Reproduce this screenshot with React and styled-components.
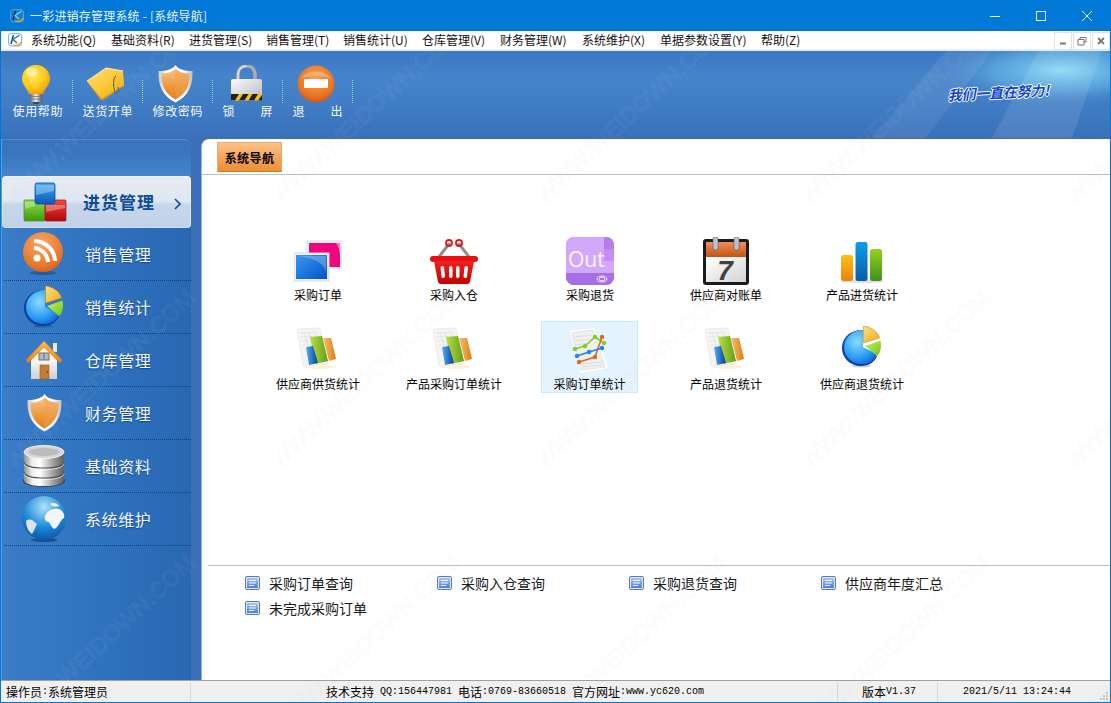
import React from "react";
import styled, { createGlobalStyle } from "styled-components";

const CJK = `"Noto Sans CJK SC", "Liberation Sans", sans-serif`;

const Global = createGlobalStyle`
  html, body { margin: 0; padding: 0; background: #fff; overflow: hidden; }
  * { box-sizing: border-box; }
  body { font-family: ${CJK}; font-size: 12px; }
`;

const Window = styled.div`
  position: relative;
  width: 1111px; height: 703px;
  border: 1px solid #0078d7;
  display: flex; flex-direction: column;
  overflow: hidden;
  background: #3c72ba;
`;
const TitleBar = styled.div`
  height: 30px; flex: none;
  background: #0078d7; color: #fff;
  display: flex; align-items: center;
  padding-left: 8px;
`;
const TitleText = styled.span`
  margin-left: 5px; font-size: 12px; line-height: 16px; letter-spacing: .2px; color: #eaf4fc;
`;
const WinControls = styled.div`
  margin-left: auto; display: flex; height: 30px;
`;
const WinButton = styled.div`
  width: 46px; height: 30px; display: flex; align-items: center; justify-content: center;
`;
const MenuBar = styled.div`
  height: 20px; flex: none; background: #fff;
  border-bottom: 2px solid #e9edf2;
  display: flex; align-items: center;
  padding-left: 6px; color: #111;
`;
const MenuList = styled.div`
  display: flex; gap: 14px; margin-left: 8px;
`;
const MenuEntry = styled.span`
  font-size: 12px; line-height: 16px; white-space: nowrap; width: ${p => p.$w}px;
`;
const MdiButtons = styled.div`
  margin-left: auto; display: flex; gap: 1px; height: 18px; align-self: flex-start; margin-top: 1px;
`;
const MdiButton = styled.div`
  width: 18px; height: 18px; border: 1px solid #dfe1e4; background: #fff;
  display: flex; align-items: center; justify-content: center;
`;
const Banner = styled.div`
  position: relative; height: 87px; flex: none;
  background: linear-gradient(180deg, #3c78c3 0%, #4583cb 30%, #3f7cc4 65%, #3a70ba 100%);
  display: flex; padding: 14px 0 0 2px; overflow: hidden;
`;
const BannerArt = styled.svg`
  position: absolute; right: 0; top: 0; width: 300px; height: 87px;
`;
const ToolItem = styled.div`
  width: 69px; height: 56px; display: flex; flex-direction: column; align-items: center; color: #fff;
`;
const ToolIconBox = styled.div`
  height: 38px; width: 69px; display: flex; justify-content: center; align-items: flex-start;
  padding-right: ${p => p.$nudge || 0}px;
`;
const ToolLabel = styled.span`
  width: 50px; font-size: 12px; line-height: 16px; text-align: justify; text-align-last: justify; color: #f4f8fd;
`;
const ToolSep = styled.div`
  width: 1px; height: 23px; margin-top: 15px; flex: none;
  border-left: 1px dotted #a8c4e4;
`;
const Slogan = styled.span`
  position: absolute; left: 948px; top: 31px; transform: rotate(-3deg) skewX(-14deg);
  font-size: 14px; font-weight: 700; letter-spacing: -.2px; color: #1046c8; white-space: nowrap;
  text-shadow: 1px 0 0 #fff, -1px 0 0 #fff, 0 1px 0 #fff, 0 -1px 0 #fff;
`;
const Main = styled.div`
  height: 542px; flex: none; display: flex; background: #3c6fb8;
`;
const Sidebar = styled.div`
  width: 190px; flex: none; margin-top: 1px; margin-right: 10px;
  background: linear-gradient(90deg, #3a7cc6 0%, #2f73bf 50%, #2967b2 100%);
  border-left: 1px solid #5b9be0;
  display: flex; flex-direction: column;
  border-radius: 0 4px 0 0;
`;
const SideHead = styled.div`
  height: 37px; flex: none; border-radius: 0 6px 0 0;
  background: linear-gradient(180deg, #3a73bb 0%, #3b76c0 40%, #4584cc 100%);
  box-shadow: inset 0 1px 0 #5089cf;
`;
const SideItem = styled.div`
  height: ${p => (p.$active ? 52 : 53)}px; flex: none;
  display: flex; align-items: center; position: relative;
  padding-left: ${p => (p.$active ? 19 : 16)}px; margin-left: ${p => (p.$active ? 0 : 2)}px;
  ${p => (p.$active
    ? `background: linear-gradient(180deg, #e6ecf5 0%, #dfe7f2 48%, #c6d7ec 55%, #bfd2e9 100%);
       border-radius: 4px; box-shadow: inset 0 0 0 1px rgba(255,255,255,.35);`
    : `border-bottom: 1px dotted #0c3f7e;`)}
`;
const SideIconBox = styled.div`
  width: 48px; height: 48px; flex: none; display: flex; align-items: center; justify-content: center;
`;
const SideLabel = styled.span`
  margin-left: ${p => (p.$active ? 14 : 17)}px;
  font-size: ${p => (p.$active ? 17 : 16)}px;
  font-weight: ${p => (p.$active ? 700 : 400)};
  letter-spacing: ${p => (p.$active ? 1 : .6)}px;
  line-height: 22px;
  color: ${p => (p.$active ? "#0e4b92" : "#f5f9fe")};
  text-shadow: ${p => (p.$active ? "none" : "0 1px 1px rgba(0,30,80,.5)")};
`;
const SideChevron = styled.svg`
  position: absolute; right: 9px; top: 22px;
`;
const Panel = styled.div`
  flex: 1; margin-top: 1px; background: #fff;
  border-radius: 8px 0 0 0;
  border-left: 1px solid #8fb4ea;
  display: flex; flex-direction: column;
`;
const TabStrip = styled.div`
  height: 36px; flex: none; border-bottom: 1px solid #bdbdbd;
  padding: 3px 0 0 15px;
`;
const TabButton = styled.div`
  width: 65px; height: 30px;
  background: linear-gradient(180deg, #fdc288 0%, #f6a860 45%, #ee8d36 100%);
  border: 1px solid #e3ad78; border-bottom-color: #d47a22; border-right-color:#e8a466;
  display: flex; align-items: center; justify-content: center;
  font-size: 12px; font-weight: 700; letter-spacing: .4px; color: #000;
`;
const Launcher = styled.div`
  flex: 1; padding: 57px 0 0 68px;
  display: grid; grid-template-columns: repeat(5, 96px); grid-auto-rows: 72px;
  column-gap: 40px; row-gap: 17px; align-content: start;
`;
const LaunchItem = styled.div`
  display: flex; flex-direction: column; align-items: center; padding-top: 4px;
  border: 1px solid ${p => (p.$hot ? "#cce8ff" : "transparent")};
  background: ${p => (p.$hot ? "#e5f3ff" : "transparent")};
  margin: ${p => (p.$hot ? "0 0 0 -1px" : "0")};
`;
const LaunchIcon = styled.div`
  width: 48px; height: 48px; flex: none; display: flex; justify-content: center;
`;
const LaunchLabel = styled.span`
  margin-top: 2px; font-size: 12px; line-height: 16px; color: #000; white-space: nowrap;
`;
const Links = styled.div`
  height: 115px; flex: none; margin-left: 6px; border-top: 1px solid #bdbdbd;
  padding: 4px 0 0 37px;
  display: grid; grid-template-columns: repeat(4, 192px); grid-auto-rows: 25px; align-content: start;
`;
const LinkItem = styled.div`
  display: flex; align-items: center; gap: 9px; font-size: 14px; color: #1a1a1a; white-space: nowrap;
`;
const StatusBar = styled.div`
  height: 22px; flex: none; background: #f0f0f0;
  border-top: 1px solid #a0a0a0;
  display: flex; align-items: stretch; position: relative;
  font-size: 12px; color: #000;
`;
const StatusCell = styled.div`
  width: ${p => p.$w}px; flex: ${p => (p.$w ? "none" : 1)};
  margin: 2px 0 1px;
  padding-left: ${p => p.$pl || 0}px;
  border-right: ${p => (p.$last ? "none" : "1px solid #d6d6d6")};
  display: flex; align-items: center; white-space: pre; line-height: 16px;
`;
const Mono = styled.span`
  font-family: "Liberation Mono", monospace; font-size: 10px; white-space: pre;
`;
const Grip = styled.svg`
  position: absolute; right: 1px; bottom: 1px;
`;
const Watermark = styled.svg`
  position: absolute; left: 0; top: 0; width: 1111px; height: 703px; pointer-events: none;
`;

/* ---------- icons ---------- */

const Logo = ({ onBlue }) => (
  <svg width="16" height="16" viewBox="0 0 16 16">
    <rect x="1.500" y="1.500" width="13" height="12.500" rx="2.500" fill={onBlue ? "#1a7fc8" : "#fff"} stroke={onBlue ? "#4aa0d8" : "#7fb6e0"} />
    <path d="M6.500 3 L4 12" fill="none" stroke={onBlue ? "#0a3a78" : "#12498f"} strokeWidth="1.500" />
    <path d="M12.500 3 L6 7.500 L10 11" fill="none" stroke={onBlue ? "#8fd0f0" : "#1a66b0"} strokeWidth="1.200" />
    <path d="M6 13 Q11 14.500 15 10" fill="none" stroke="#f0a020" strokeWidth="1.200" />
  </svg>
);

const Bulb = () => (
  <svg width="30" height="39" viewBox="0 0 30 39">
    <defs>
      <radialGradient id="bulbG" cx=".4" cy=".35" r=".7">
        <stop offset="0" stopColor="#ffe96a" /><stop offset=".6" stopColor="#ffc91a" /><stop offset="1" stopColor="#f09a00" />
      </radialGradient>
      <linearGradient id="bulbB" x1="0" x2="1"><stop offset="0" stopColor="#666" /><stop offset=".5" stopColor="#eee" /><stop offset="1" stopColor="#555" /></linearGradient>
    </defs>
    <path d="M15 0 C6 0 1 6.500 1 14 C1 20 6 23 8 29 L22 29 C24 23 29 20 29 14 C29 6.500 24 0 15 0Z" fill="url(#bulbG)" />
    <ellipse cx="11" cy="7" rx="6" ry="4" fill="#fff6b0" opacity=".7" />
    <rect x="9" y="29" width="12" height="8" rx="1" fill="url(#bulbB)" />
    <path d="M9 31.500 H21 M9 34 H21" stroke="#777" strokeWidth=".8" />
    <rect x="12" y="37" width="6" height="2" rx="1" fill="#444" />
  </svg>
);

const Tag = () => (
  <svg width="40" height="36" viewBox="0 0 40 36">
    <defs>
      <linearGradient id="tagG" x1="0" y1="0" x2="1" y2="1"><stop offset="0" stopColor="#ffe27a" /><stop offset=".5" stopColor="#fcc93c" /><stop offset="1" stopColor="#eda712" /></linearGradient>
    </defs>
    <path d="M1 16 L20 3 L37 6 L38 20 L17 34 Q15 35 14 33Z" fill="#d9921a" transform="translate(0 1)" />
    <path d="M1 16 L20 3 L37 6 L38 20 L17 33 Q15 34 14 32Z" fill="url(#tagG)" />
    <path d="M1 16 L20 3 L37 6" fill="none" stroke="#fff2b8" strokeWidth="1" />
    <path d="M30 11 C27 12 27 22 29 27 C31 30 33 27 32 22" fill="none" stroke="#555" strokeWidth="1" />
  </svg>
);

const Shield = ({ id = "sh", w = 35, h = 38 }) => (
  <svg width={w} height={h} viewBox="0 0 35 38">
    <defs>
      <linearGradient id={id} x1="0" y1="0" x2="0" y2="1"><stop offset="0" stopColor="#f8c488" /><stop offset=".55" stopColor="#ee9a3e" /><stop offset="1" stopColor="#dd7f1c" /></linearGradient>
      <linearGradient id={id + "b"} x1="0" y1="0" x2="1" y2="0"><stop offset="0" stopColor="#c8c8c8" /><stop offset=".25" stopColor="#fff" /><stop offset=".75" stopColor="#fff" /><stop offset="1" stopColor="#b8bcc0" /></linearGradient>
    </defs>
    <path d="M17.500 0 C20 4 26 6 34.500 6 C35 20 31 31 17.500 37.500 C4 31 0 20 .5 6 C9 6 15 4 17.500 0Z" fill={`url(#${id}b)`} />
    <path d="M17.500 3.500 C20 6.500 25 8.500 31.500 8.500 C32 20 28 29 17.500 34.500 C7 29 3 20 3.500 8.500 C10 8.500 15 6.500 17.500 3.500Z" fill={`url(#${id})`} />
    <path d="M17.500 3.500 C20 6.500 25 8.500 31.500 8.500 C32 20 28 29 17.500 34.500Z" fill="#f0a050" opacity=".45" />
  </svg>
);

const LockIcon = () => (
  <svg width="33" height="36" viewBox="0 0 33 36">
    <defs>
      <linearGradient id="lockB" x1="0" y1="0" x2="1" y2="1"><stop offset="0" stopColor="#fbfbfb" /><stop offset="1" stopColor="#b4b8bd" /></linearGradient>
    </defs>
    <path d="M8 16 V10 C8 4 12 1 16.500 1 C21 1 25 4 25 10 V16" fill="none" stroke="#a8acb0" strokeWidth="3.600" />
    <path d="M8 16 V10 C8 4 12 1 16.500 1" fill="none" stroke="#e4e6e8" strokeWidth="1.400" />
    <rect x="1" y="14" width="31" height="22" rx="2" fill="url(#lockB)" />
    <rect x="1" y="29" width="31" height="6.500" fill="#23211b" />
    <path d="M5 35.500 L9 29 H13 L9 35.500Z M14.500 35.500 L18.500 29 H22.500 L18.500 35.500Z M24 35.500 L28 29 H32 V30 L28 35.500Z" fill="#f0c020" />
  </svg>
);

const ExitIcon = () => (
  <svg width="38" height="38" viewBox="0 0 38 38">
    <defs>
      <radialGradient id="exG" cx=".5" cy=".35" r=".7"><stop offset="0" stopColor="#f9a050" /><stop offset=".7" stopColor="#ea7420" /><stop offset="1" stopColor="#c84f0a" /></radialGradient>
    </defs>
    <circle cx="19" cy="19" r="18.500" fill="url(#exG)" />
    <path d="M4 14 C8 4 30 4 34 14 C28 10 10 10 4 14Z" fill="#fff" opacity=".25" />
    <rect x="7" y="14" width="24" height="9" fill="#fff" />
  </svg>
);

const Cubes = () => (
  <svg width="44" height="40" viewBox="0 0 44 40">
    <defs>
      <linearGradient id="cB" x1="0" y1="0" x2="0" y2="1"><stop offset="0" stopColor="#3da6ee" /><stop offset="1" stopColor="#0b5ab8" /></linearGradient>
      <linearGradient id="cG" x1="0" y1="0" x2="0" y2="1"><stop offset="0" stopColor="#8fdc50" /><stop offset="1" stopColor="#3b9c05" /></linearGradient>
      <linearGradient id="cR" x1="0" y1="0" x2="0" y2="1"><stop offset="0" stopColor="#f04a4a" /><stop offset="1" stopColor="#b30404" /></linearGradient>
    </defs>
    <rect x="1" y="18" width="21" height="21" rx="1" fill="url(#cG)" stroke="#4f8f33" strokeWidth=".8" />
    <rect x="22" y="18" width="21" height="21" rx="1" fill="url(#cR)" stroke="#8e2a2a" strokeWidth=".8" />
    <rect x="12" y="1" width="20" height="21" rx="2" fill="url(#cB)" stroke="#0f4e9e" strokeWidth=".8" />
    <path d="M13 3 H31 V9 L13 13Z" fill="#fff" opacity=".3" />
    <path d="M2 20 H12 V24 L2 27Z M23 23 H42 V26 L23 30Z" fill="#fff" opacity=".3" />
  </svg>
);

const Rss = () => (
  <svg width="42" height="44" viewBox="0 0 42 44">
    <defs>
      <radialGradient id="rssG" cx=".45" cy=".3" r=".8"><stop offset="0" stopColor="#f8a868" /><stop offset=".7" stopColor="#e9762c" /><stop offset="1" stopColor="#c85510" /></radialGradient>
    </defs>
    <ellipse cx="20" cy="41" rx="13" ry="2" fill="#123f77" opacity=".5" />
    <circle cx="20" cy="20" r="20" fill="url(#rssG)" />
    <circle cx="14" cy="26" r="3.500" fill="#fff" />
    <path d="M11 16 A15 15 0 0 1 25 30 M11 9 A21 21 0 0 1 32 29" fill="none" stroke="#fff" strokeWidth="4" />
  </svg>
);

const Pie = ({ id = "pie", w = 40, h = 42 }) => (
  <svg width={w} height={h} viewBox="0 0 40 42">
    <defs>
      <radialGradient id={id} cx=".4" cy=".35" r=".8"><stop offset="0" stopColor="#8adcff" /><stop offset=".6" stopColor="#2a9cf0" /><stop offset="1" stopColor="#0a55d0" /></radialGradient>
      <linearGradient id={id + "g"} x1="0" y1="0" x2="1" y2="1"><stop offset="0" stopColor="#c8f060" /><stop offset="1" stopColor="#72c41a" /></linearGradient>
      <linearGradient id={id + "y"} x1="0" y1="0" x2="1" y2="1"><stop offset="0" stopColor="#ffdf80" /><stop offset="1" stopColor="#eea91f" /></linearGradient>
    </defs>
    <ellipse cx="19" cy="40" rx="10" ry="1.500" fill="#000" opacity=".2" />
    <path d="M20 4 C8 4 0 12 0 22 C0 32 8 40 19 40 C27 40 33 36 35 30 L20 23Z" fill="#0a3fae" />
    <path d="M21 4 C10 4 2 12 2 21 C2 31 10 38 20 38 C28 38 33 34 35 28 L21 21Z" fill={`url(#${id})`} />
    <path d="M21.500 0 C30 1 36 6 37.500 12 L21.500 17Z" fill={`url(#${id}y)`} stroke="#c68a12" strokeWidth=".6" />
    <path d="M23 20 L38.500 14.500 C40 21 38 28 35 30Z" fill={`url(#${id}g)`} />
  </svg>
);

const House = () => (
  <svg width="36" height="40" viewBox="0 0 36 40">
    <defs>
      <linearGradient id="hW" x1="0" y1="0" x2="0" y2="1"><stop offset="0" stopColor="#fff" /><stop offset="1" stopColor="#cfcfcf" /></linearGradient>
      <linearGradient id="hR" x1="0" y1="0" x2="0" y2="1"><stop offset="0" stopColor="#ffbf50" /><stop offset="1" stopColor="#e87e10" /></linearGradient>
    </defs>
    <rect x="27" y="3" width="4" height="9" fill="#e8e8e8" />
    <path d="M5 17 H31 V39 H5Z" fill="url(#hW)" />
    <path d="M6 18 L18 6 L30 18 L30 20 L6 20Z" fill="#fbf4e4" />
    <path d="M0 20 L18 1 L36 20 L34 23 L18 7 L2 23Z" fill="url(#hR)" stroke="#d87010" strokeWidth=".5" />
    <rect x="13" y="13" width="10" height="7" fill="#8fc0e8" stroke="#9a6a30" />
    <path d="M18 13 V20" stroke="#9a6a30" />
    <rect x="14" y="25" width="9" height="14" fill="#c57d30" stroke="#a05d1c" strokeWidth=".6" />
    <circle cx="21" cy="32" r=".8" fill="#333" />
  </svg>
);

const Database = () => (
  <svg width="42" height="42" viewBox="0 0 42 42">
    <defs>
      <linearGradient id="dbG" x1="0" x2="1"><stop offset="0" stopColor="#8c8c8c" /><stop offset=".2" stopColor="#eee" /><stop offset=".4" stopColor="#fff" /><stop offset=".75" stopColor="#999" /><stop offset="1" stopColor="#5f5f5f" /></linearGradient>
    </defs>
    <ellipse cx="21" cy="36" rx="21" ry="6" fill="#404040" />
    <path d="M1 7 V35 C1 39 10 41 21 41 C32 41 41 39 41 35 V7Z" fill="url(#dbG)" />
    <ellipse cx="21" cy="7" rx="20" ry="6.500" fill="#d4d4d4" stroke="#f4f4f4" />
    <ellipse cx="21" cy="7" rx="15" ry="4" fill="#bcbcbc" />
    <path d="M1 17 C1 21 10 23 21 23 C32 23 41 21 41 17 M1 27 C1 31 10 33 21 33 C32 33 41 31 41 27" fill="none" stroke="#505050" strokeWidth="1.200" />
    <path d="M1 18.500 C1 22.500 10 24.500 21 24.500 C32 24.500 41 22.500 41 18.500 M1 28.500 C1 32.500 10 34.500 21 34.500 C32 34.500 41 32.500 41 28.500" fill="none" stroke="#fff" strokeWidth=".8" opacity=".8" />
  </svg>
);

const Globe = () => (
  <svg width="44" height="46" viewBox="0 0 44 46">
    <defs>
      <radialGradient id="glG" cx=".5" cy=".25" r=".8"><stop offset="0" stopColor="#b0e0fa" /><stop offset=".55" stopColor="#1f8edb" /><stop offset="1" stopColor="#064fa6" /></radialGradient>
    </defs>
    <ellipse cx="22" cy="44" rx="13" ry="2" fill="#0c3366" opacity=".6" />
    <circle cx="22" cy="22" r="22" fill="url(#glG)" />
    <path d="M23 20 C26 13 33 12 37 13 C41 15 43 18 42 22 C39 23 38 28 34 32 C31 35 29 29 27 26 C24 26 22 24 23 20Z M28 8 C31 6 35 7 37 10 C34 11 31 11 28 8Z" fill="#f2f6f9" />
    <path d="M4 25 C8 22 11 24 15 28 C13 32 12 35 10 38 C6 35 4 30 4 25Z" fill="#dbe4ea" />
  </svg>
);

const Windows = () => (
  <svg width="48" height="48" viewBox="0 0 48 48">
    <defs>
      <linearGradient id="wB" x1="0" y1="0" x2="1" y2="1"><stop offset="0" stopColor="#3d97f2" /><stop offset="1" stopColor="#0055cc" /></linearGradient>
    </defs>
    <rect x="13" y="4" width="35" height="27" fill="#f2f2f2" stroke="#dcdcdc" />
    <rect x="15" y="6" width="31" height="24" fill="#f0047f" />
    <path d="M42 6 H46 V22 Q46 12 42 6Z" fill="#fff" opacity=".45" />
    <rect x="0" y="16" width="35" height="28" fill="#f2f2f2" stroke="#d8d8d8" />
    <rect x="2" y="18" width="31" height="24" fill="url(#wB)" />
    <path d="M4 19 H32 V36 Q30 22 4 19Z" fill="#fff" opacity=".25" />
  </svg>
);

const Basket = () => (
  <svg width="48" height="48" viewBox="0 0 48 48">
    <defs>
      <linearGradient id="bkG" x1="0" y1="0" x2="0" y2="1"><stop offset="0" stopColor="#f22020" /><stop offset="1" stopColor="#c80000" /></linearGradient>
    </defs>
    <path d="M8 21 L19 7 M40 21 L29 7" stroke="#8a8f96" strokeWidth="3" strokeLinecap="round" />
    <circle cx="19" cy="6" r="3" fill="none" stroke="#d81818" strokeWidth="1.800" />
    <circle cx="29" cy="6" r="3" fill="none" stroke="#d81818" strokeWidth="1.800" />
    <rect x="0" y="19" width="48" height="6" rx="3" fill="#e41212" />
    <path d="M4 24 H44 L40 45 Q39.500 47 37 47 H11 Q8.500 47 8 45Z" fill="url(#bkG)" />
    <g fill="#fff">
      <rect x="11" y="29" width="3.500" height="12" rx="1.700" transform="rotate(-6 13 35)" />
      <rect x="19" y="29" width="3.500" height="12" rx="1.700" />
      <rect x="26" y="29" width="3.500" height="12" rx="1.700" />
      <rect x="34" y="29" width="3.500" height="12" rx="1.700" transform="rotate(6 35 35)" />
    </g>
  </svg>
);

const OutIcon = () => (
  <svg width="48" height="48" viewBox="0 0 48 48">
    <rect width="48" height="48" rx="8" fill="#c48cf4" />
    <path d="M0 8 A8 8 0 0 1 8 0 H38 V38 H0Z" fill="#d3a8fa" />
    <path d="M38 0 H40 A8 8 0 0 1 48 8 V12 H38Z" fill="#b57cec" />
    <path d="M38 24 H48 V36 H38Z" fill="#d3a8fa" />
    <path d="M0 36 H48 V40 A8 8 0 0 1 40 48 H8 A8 8 0 0 1 0 40Z" fill="#a76fe6" />
    <text x="2" y="30" fontFamily="'Open Sans', sans-serif" fontSize="21" fill="#fbf4ff">Out</text>
    <g fill="none" stroke="#f0e4ff" strokeWidth="1"><ellipse cx="36" cy="42" rx="5" ry="3" /><ellipse cx="36" cy="42" rx="3" ry="1.800" /></g>
  </svg>
);

const Calendar = () => (
  <svg width="48" height="48" viewBox="0 0 48 48">
    <defs>
      <linearGradient id="caO" x1="0" y1="0" x2="0" y2="1"><stop offset="0" stopColor="#f0905a" /><stop offset="1" stopColor="#c05410" /></linearGradient>
      <linearGradient id="caW" x1="0" y1="0" x2="1" y2="1"><stop offset="0" stopColor="#fff" /><stop offset="1" stopColor="#d4d4d4" /></linearGradient>
    </defs>
    <rect x="1" y="2" width="46" height="46" rx="3" fill="#1a1a1a" />
    <rect x="4" y="5" width="40" height="15" fill="url(#caO)" />
    <rect x="4" y="20" width="40" height="25" fill="url(#caW)" />
    <rect x="11" y="0" width="5" height="13" rx="2" fill="#b9c4d0" stroke="#556" strokeWidth=".6" />
    <rect x="32" y="0" width="5" height="13" rx="2" fill="#b9c4d0" stroke="#556" strokeWidth=".6" />
    <text x="23" y="43" textAnchor="middle" fontFamily="'Liberation Sans', sans-serif" fontWeight="700" fontStyle="italic" fontSize="28" fill="#444">7</text>
  </svg>
);

const Bars = () => (
  <svg width="48" height="48" viewBox="0 0 48 48">
    <defs>
      <linearGradient id="baY" x1="0" y1="0" x2="0" y2="1"><stop offset="0" stopColor="#fbc20c" /><stop offset="1" stopColor="#ec820c" /></linearGradient>
      <linearGradient id="baB" x1="0" y1="0" x2="0" y2="1"><stop offset="0" stopColor="#0a9fe8" /><stop offset="1" stopColor="#0a5ca8" /></linearGradient>
      <linearGradient id="baG" x1="0" y1="0" x2="0" y2="1"><stop offset="0" stopColor="#97d11a" /><stop offset="1" stopColor="#3f8f20" /></linearGradient>
    </defs>
    <ellipse cx="24" cy="44.500" rx="22" ry="1.500" fill="#bbb" opacity=".5" />
    <rect x="3" y="18" width="12" height="26" rx="2.500" fill="url(#baY)" />
    <rect x="17.500" y="5" width="12" height="39" rx="2.500" fill="url(#baB)" />
    <rect x="32" y="12" width="12" height="32" rx="2.500" fill="url(#baG)" />
  </svg>
);

const ReportBars = ({ id }) => (
  <svg width="48" height="48" viewBox="0 0 48 48">
    <defs>
      <linearGradient id={id + "g"} x1="0" y1="0" x2="1" y2="0"><stop offset="0" stopColor="#b8e04a" /><stop offset="1" stopColor="#5fa011" /></linearGradient>
      <linearGradient id={id + "o"} x1="0" y1="0" x2="1" y2="0"><stop offset="0" stopColor="#f8c07a" /><stop offset="1" stopColor="#e07a06" /></linearGradient>
      <linearGradient id={id + "b"} x1="0" y1="0" x2="1" y2="0"><stop offset="0" stopColor="#55aef0" /><stop offset="1" stopColor="#063f9c" /></linearGradient>
    </defs>
    <path d="M3 3 L26 2 L34 38 L9 40Z" fill="#f4f4f4" stroke="#ececec" />
    <g stroke="#dcdcdc" strokeWidth=".6">
      <path d="M6 7 L24 6 M7 11 L25 10 M8 15 L15 15 M9 19 L15 19 M10 23 L13 23" />
      <path d="M10 6 L14 20 M15 6 L17 14 M20 6 L21 10" />
    </g>
    <ellipse cx="26" cy="41" rx="14" ry="2" fill="#ffe3b8" opacity=".55" />
    <path d="M29 12 L37 12 L42 33 L35 35Z" fill={`url(#${id}o)`} />
    <path d="M16 11 L28 10 L34 35 L21 38Z" fill={`url(#${id}g)`} />
    <path d="M12 21 L19 20 L24 37 L15 39Z" fill={`url(#${id}b)`} />
  </svg>
);

const ReportLines = () => (
  <svg width="48" height="48" viewBox="0 0 48 48">
    <path d="M4 5 L28 2 L42 42 L14 47Z" fill="#fff" opacity=".9" />
    <path d="M6 7 L27 4 L39 41 L15 44Z" fill="#f0f0f0" stroke="#e2e2e2" />
    <g stroke="#d4d4d4" strokeWidth=".6"><path d="M8 11 L26 9 M9 15 L27 13 M10 19 L24 17 M15 38 L36 36 M16 41 L37 39" /></g>
    <path d="M9 23 L19 20 L29 11 L38 17" fill="none" stroke="#8ac82c" strokeWidth="1.600" />
    <g fill="#8ac82c"><circle cx="9" cy="23" r="2.200" /><circle cx="19" cy="20" r="2.200" /><circle cx="29" cy="11" r="2.200" /><circle cx="38" cy="17" r="2.200" /></g>
    <path d="M13 36 L29 31 L36 11" fill="none" stroke="#dc6a1e" strokeWidth="1.600" />
    <g fill="#dc6a1e"><circle cx="13" cy="36" r="2.200" /><circle cx="29" cy="31" r="2.200" /><circle cx="36" cy="11" r="2.200" /></g>
    <path d="M11 30 L23 26 L36 22" fill="none" stroke="#1e86ee" strokeWidth="1.600" />
    <g fill="#1e86ee"><circle cx="11" cy="30" r="2.200" /><circle cx="23" cy="26" r="2.200" /><circle cx="36" cy="22" r="2.200" /></g>
  </svg>
);

const DocIcon = () => (
  <svg width="15" height="14" viewBox="0 0 15 14">
    <defs>
      <linearGradient id="dcG" x1="0" y1="0" x2="0" y2="1"><stop offset="0" stopColor="#a8c6f4" /><stop offset="1" stopColor="#4a7fdc" /></linearGradient>
    </defs>
    <rect x=".5" y=".5" width="14" height="13" rx="1.500" fill="#dde8f8" stroke="#5b7ba8" />
    <rect x="2" y="2" width="11" height="10" fill="url(#dcG)" />
    <path d="M4 4.500 H11 M4 7 H11 M4 9.500 H9" stroke="#eef4ff" strokeWidth="1" />
  </svg>
);

/* ---------- data ---------- */

const menus = [
  ["系统功能(Q)", 66], ["基础资料(R)", 64], ["进货管理(S)", 63], ["销售管理(T)", 63], ["销售统计(U)", 65],
  ["仓库管理(V)", 64], ["财务管理(W)", 68], ["系统维护(X)", 64], ["单据参数设置(Y)", 87], ["帮助(Z)", 39],
];

const tools = [
  { label: "使用帮助", icon: <Bulb />, nudge: 4 },
  { label: "送货开单", icon: <Tag />, nudge: 3 },
  { label: "修改密码", icon: <Shield id="shT" />, nudge: 4 },
  { label: "锁 屏", icon: <LockIcon />, nudge: 3 },
  { label: "退 出", icon: <ExitIcon />, nudge: 3 },
];

const side = [
  { label: "销售管理", icon: <Rss /> },
  { label: "销售统计", icon: <Pie id="pieS" /> },
  { label: "仓库管理", icon: <House /> },
  { label: "财务管理", icon: <Shield id="shS" /> },
  { label: "基础资料", icon: <Database /> },
  { label: "系统维护", icon: <Globe /> },
];

const launch = [
  { label: "采购订单", icon: <Windows /> },
  { label: "采购入仓", icon: <Basket /> },
  { label: "采购退货", icon: <OutIcon /> },
  { label: "供应商对账单", icon: <Calendar /> },
  { label: "产品进货统计", icon: <Bars /> },
  { label: "供应商供货统计", icon: <ReportBars id="r1" /> },
  { label: "产品采购订单统计", icon: <ReportBars id="r2" /> },
  { label: "采购订单统计", icon: <ReportLines />, hot: true },
  { label: "产品退货统计", icon: <ReportBars id="r3" /> },
  { label: "供应商退货统计", icon: <Pie id="pieL" w={40} h={42} /> },
];

const links = ["采购订单查询", "采购入仓查询", "采购退货查询", "供应商年度汇总", "未完成采购订单"];

export default function App() {
  return (
    <>
      <Global />
      <Window>
        <TitleBar>
          <Logo onBlue />
          <TitleText>一彩进销存管理系统 - [系统导航]</TitleText>
          <WinControls>
            <WinButton>
              <svg width="10" height="10" viewBox="0 0 10 10"><path d="M0 5.500 H10" stroke="#fff" /></svg>
            </WinButton>
            <WinButton>
              <svg width="10" height="10" viewBox="0 0 10 10"><rect x=".5" y=".5" width="9" height="9" fill="none" stroke="#fff" /></svg>
            </WinButton>
            <WinButton>
              <svg width="10" height="10" viewBox="0 0 10 10"><path d="M0 0 L10 10 M10 0 L0 10" stroke="#fff" /></svg>
            </WinButton>
          </WinControls>
        </TitleBar>
        <MenuBar>
          <Logo />
          <MenuList>
            {menus.map(([m, w]) => <MenuEntry key={m} $w={w}>{m}</MenuEntry>)}
          </MenuList>
          <MdiButtons>
            <MdiButton>
              <svg width="8" height="8" viewBox="0 0 8 8"><path d="M1 6.500 H7" stroke="#777" strokeWidth="2" /></svg>
            </MdiButton>
            <MdiButton>
              <svg width="10" height="9" viewBox="0 0 10 9"><path d="M3 2.500 V.5 H9 V5 H7 M1 2.500 H7 V8 H1Z" fill="none" stroke="#777" /></svg>
            </MdiButton>
            <MdiButton>
              <svg width="8" height="8" viewBox="0 0 8 8"><path d="M1 1 L7 7 M7 1 L1 7" stroke="#777" strokeWidth="1.800" /></svg>
            </MdiButton>
          </MdiButtons>
        </MenuBar>
        <Banner>
          <BannerArt viewBox="0 0 300 87">
            <defs>
              <radialGradient id="bnGlow" cx=".84" cy=".22" r=".42">
                <stop offset="0" stopColor="#8ae0f8" stopOpacity=".95" />
                <stop offset=".55" stopColor="#6cc0ec" stopOpacity=".5" />
                <stop offset="1" stopColor="#4583cb" stopOpacity="0" />
              </radialGradient>
            </defs>
            <rect width="300" height="87" fill="url(#bnGlow)" />
            <path d="M136 0 H182 L116 87 H62Z" fill="#fff" opacity=".07" />
            <path d="M229 0 H292 L262 87 H182Z" fill="#fff" opacity=".1" />
          </BannerArt>
          {tools.map(t => (
            <React.Fragment key={t.label}>
              <ToolItem>
                <ToolIconBox $nudge={t.nudge}>{t.icon}</ToolIconBox>
                <ToolLabel>{t.label}</ToolLabel>
              </ToolItem>
              <ToolSep />
            </React.Fragment>
          ))}
          <Slogan>我们一直在努力!</Slogan>
        </Banner>
        <Main>
          <Sidebar>
            <SideHead />
            <SideItem $active>
              <SideIconBox><Cubes /></SideIconBox>
              <SideLabel $active>进货管理</SideLabel>
              <SideChevron width="8" height="12" viewBox="0 0 8 12">
                <path d="M1 1 L6 6 L1 11" fill="none" stroke="#0e4b92" strokeWidth="1.600" />
              </SideChevron>
            </SideItem>
            {side.map(s => (
              <SideItem key={s.label}>
                <SideIconBox>{s.icon}</SideIconBox>
                <SideLabel>{s.label}</SideLabel>
              </SideItem>
            ))}
          </Sidebar>
          <Panel>
            <TabStrip><TabButton>系统导航</TabButton></TabStrip>
            <Launcher>
              {launch.map(l => (
                <LaunchItem key={l.label} $hot={l.hot}>
                  <LaunchIcon>{l.icon}</LaunchIcon>
                  <LaunchLabel>{l.label}</LaunchLabel>
                </LaunchItem>
              ))}
            </Launcher>
            <Links>
              {links.map(l => (
                <LinkItem key={l}><DocIcon />{l}</LinkItem>
              ))}
            </Links>
          </Panel>
        </Main>
        <StatusBar>
          <StatusCell $w={190} $pl={5}>操作员<Mono>:</Mono>系统管理员</StatusCell>
          <StatusCell $w={647} $pl={135}>
            技术支持<Mono> QQ:156447981 </Mono>电话<Mono>:0769-83660518 </Mono>官方网址<Mono>:www.yc620.com</Mono>
          </StatusCell>
          <StatusCell $w={100} $pl={24}>版本<Mono>V1.37</Mono></StatusCell>
          <StatusCell $pl={25} $last><Mono>2021/5/11 13:24:44</Mono></StatusCell>
          <Grip width="10" height="10" viewBox="0 0 10 10">
            <g fill="#c4c4c4"><rect x="7" y="1" width="2" height="2" /><rect x="4" y="4" width="2" height="2" /><rect x="7" y="4" width="2" height="2" /><rect x="1" y="7" width="2" height="2" /><rect x="4" y="7" width="2" height="2" /><rect x="7" y="7" width="2" height="2" /></g>
          </Grip>
        </StatusBar>
        <Watermark viewBox="0 0 1111 703">
          <defs>
            <pattern id="wm" x="11" y="-59" width="265" height="265" patternUnits="userSpaceOnUse">
              <text transform="translate(2 263) rotate(-43)" fontFamily="'Liberation Sans', sans-serif" fontSize="23"
                textLength="250" fill="none" stroke="#c4ccd4" strokeOpacity=".12" strokeWidth=".7">WWW.WEIDOWN.COM</text>
            </pattern>
          </defs>
          <rect x="0" y="51" width="1111" height="652" fill="url(#wm)" />
        </Watermark>
      </Window>
    </>
  );
}
